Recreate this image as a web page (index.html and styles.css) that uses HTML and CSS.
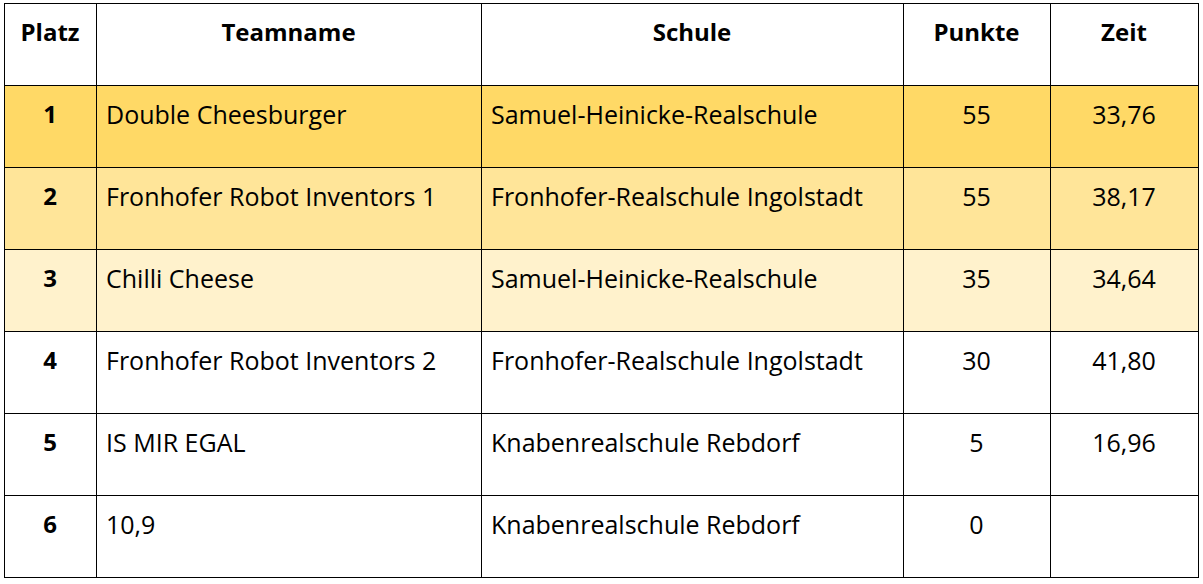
FILE: index.html
```html
<!DOCTYPE html>
<html lang="de">
<head>
<meta charset="utf-8">
<link rel="stylesheet" href="styles.css">
</head>
<body>
<table class="ranking">
  <colgroup>
    <col class="c-platz"><col class="c-team"><col class="c-schule"><col class="c-punkte"><col class="c-zeit">
  </colgroup>
  <thead>
    <tr><th>Platz</th><th>Teamname</th><th>Schule</th><th>Punkte</th><th>Zeit</th></tr>
  </thead>
  <tbody>
    <tr class="gold1"><td class="rank">1</td><td>Double Cheesburger</td><td>Samuel-Heinicke-Realschule</td><td class="num">55</td><td class="num">33,76</td></tr>
    <tr class="gold2"><td class="rank">2</td><td>Fronhofer Robot Inventors 1</td><td>Fronhofer-Realschule Ingolstadt</td><td class="num">55</td><td class="num">38,17</td></tr>
    <tr class="gold3"><td class="rank">3</td><td>Chilli Cheese</td><td>Samuel-Heinicke-Realschule</td><td class="num">35</td><td class="num">34,64</td></tr>
    <tr><td class="rank">4</td><td>Fronhofer Robot Inventors 2</td><td>Fronhofer-Realschule Ingolstadt</td><td class="num">30</td><td class="num">41,80</td></tr>
    <tr><td class="rank">5</td><td>IS MIR EGAL</td><td>Knabenrealschule Rebdorf</td><td class="num">5</td><td class="num">16,96</td></tr>
    <tr><td class="rank">6</td><td>10,9</td><td>Knabenrealschule Rebdorf</td><td class="num">0</td><td class="num"></td></tr>
  </tbody>
</table>
</body>
</html>
```
FILE: styles.css
```css
html, body {
  margin: 0;
  background: #ffffff;
}
body {
  padding: 3px 0 0 4px;
  font-family: "Open Sans", "Liberation Sans", sans-serif;
  color: #000;
}
.ranking {
  border-collapse: collapse;
  table-layout: fixed;
  width: 1195px;
}
.c-platz { width: 92px; }
.c-team { width: 385px; }
.c-schule { width: 422px; }
.c-punkte { width: 147px; }
.c-zeit { width: 148px; }
.ranking th,
.ranking td {
  border: 1px solid #000;
  height: 82px;
  box-sizing: border-box;
  padding: 13px 10px 0 9px;
  vertical-align: top;
  font-size: 25px;
  line-height: 30px;
  text-align: left;
  white-space: nowrap;
}
.ranking th {
  font-size: 24px;
  font-weight: 700;
  text-align: center;
}
.ranking td.rank {
  font-size: 24px;
  font-weight: 700;
  text-align: center;
}
.ranking td.num {
  text-align: center;
}
.gold1 td { background: #ffd966; }
.gold2 td { background: #ffe599; }
.gold3 td { background: #fff2cc; }
```
